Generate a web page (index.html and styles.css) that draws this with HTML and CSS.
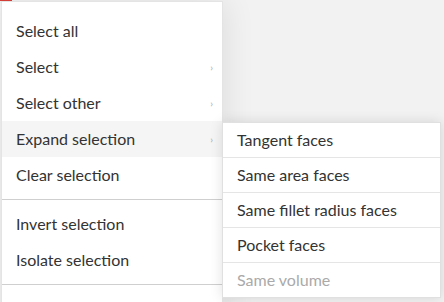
FILE: index.html
```html
<!DOCTYPE html>
<html lang="en">
  <head>
    <meta charset="UTF-8" />
    <title>Selection menu</title>
    <link rel="stylesheet" href="styles.css">
  </head>
  <body>
    <div class="tab-mark"></div>
    <div class="menu">
      <div class="item">Select all</div>
      <div class="item has-sub">Select <span class="chev">›</span></div>
      <div class="item has-sub">Select other <span class="chev">›</span></div>
      <div class="item has-sub active">Expand selection <span class="chev">›</span>
        <div class="submenu">
          <div class="sub-item">Tangent faces</div>
          <div class="sub-item">Same area faces</div>
          <div class="sub-item">Same fillet radius faces</div>
          <div class="sub-item">Pocket faces</div>
          <div class="sub-item disabled">Same volume</div>
        </div>
      </div>
      <div class="item">Clear selection</div>
      <div class="divider"></div>
      <div class="item">Invert selection</div>
      <div class="item">Isolate selection</div>
      <div class="divider"></div>
    </div>
  </body>
</html>
```

FILE: styles.css
```css
body {
  margin: 0;
  background: #f2f2f2;
  font-family: Lato, "Open Sans", sans-serif;
  font-size: 16px;
  color: #333;
  overflow: hidden;
  height: 302px;
}

.tab-mark {
  position: absolute;
  left: 0;
  top: 0;
  width: 12px;
  height: 1px;
  background: #d9413a;
}

.menu {
  width: 220px;
  margin: 1px 0 0 1px;
  padding: 11px 0 40px;
  background: #fff;
  border: 1px solid #e4e4e4;
  box-shadow: 2px 0 30px rgba(0, 0, 0, 0.09);
  position: relative;
}

.item {
  height: 36px;
  line-height: 36px;
  padding: 0 14px;
  display: flex;
  justify-content: space-between;
  align-items: center;
  position: relative;
}

.item.active {
  background: #f5f5f5;
}

.chev {
  color: #aaa;
  font-size: 10px;
  margin-right: -5px;
}

.divider {
  height: 1px;
  background: #cfcfcf;
  margin: 6px 0;
}

.submenu {
  position: absolute;
  left: 100%;
  top: 1px;
  width: 217px;
  background: #fff;
  border: 1px solid #e0e0e0;
  box-shadow: 0 0 12px rgba(0, 0, 0, 0.12);
  line-height: normal;
}

.sub-item {
  height: 34px;
  line-height: 34px;
  padding: 0 14px;
  border-top: 1px solid #e5e5e5;
}

.sub-item:first-child {
  border-top: none;
}

.sub-item.disabled {
  color: #aaa;
}
```
